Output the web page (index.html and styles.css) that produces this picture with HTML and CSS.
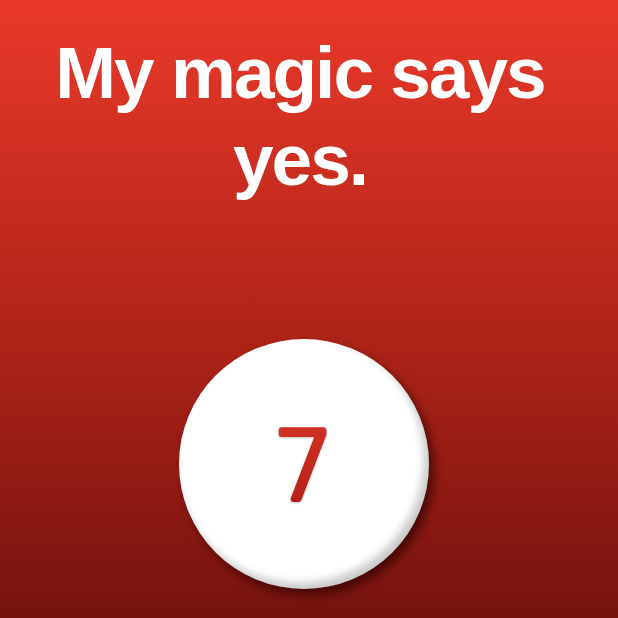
FILE: index.html
```
<!DOCTYPE html>
<html>
<head>
<meta charset="utf-8">
<link rel="stylesheet" href="styles.css">
</head>
<body>
<div class="page">
  <h1 class="title">My magic says yes.</h1>
  <div class="ball-wrap">
    <div class="ball">
      <svg class="num" width="120" height="120" viewBox="0 0 120 120">
        <defs>
          <linearGradient id="ng" x1="0" y1="0" x2="0" y2="1">
            <stop offset="0" stop-color="#d63424"/>
            <stop offset="1" stop-color="#b01b15"/>
          </linearGradient>
        </defs>
        <text x="60" y="95" text-anchor="middle" class="seven" fill="url(#ng)" stroke="url(#ng)">7</text>
      </svg>
    </div>
  </div>
</div>
</body>
</html>
```
FILE: styles.css
```
html, body {
  margin: 0;
  padding: 0;
  width: 618px;
  height: 618px;
  overflow: hidden;
}
body {
  background: linear-gradient(to bottom, #e9392a 0%, #b42519 50%, #76130f 100%);
  font-family: "Liberation Sans", Arial, sans-serif;
}
.page {
  width: 600px;
  padding-top: 29px;
}
.title {
  margin: 0;
  color: #fff;
  font-weight: bold;
  font-size: 73px;
  line-height: 87px;
  letter-spacing: -2px;
  text-align: center;
}
.ball-wrap {
  display: flex;
  justify-content: center;
  margin-top: 136px;
  padding-left: 7px;
}
.ball {
  width: 250px;
  height: 250px;
  border-radius: 50%;
  background: #fff;
  box-shadow: inset -5px -6px 9px rgba(0,0,0,0.22), 5px 6px 10px rgba(40,0,0,0.65);
  display: flex;
  align-items: center;
  justify-content: center;
}
.num {
  display: block;
}
.seven {
  font-family: "DejaVu Sans", sans-serif;
  font-weight: 200;
  font-size: 94px;
  stroke-width: 6;
  stroke-linejoin: round;
  filter: drop-shadow(0 1px 1px rgba(0,0,0,0.25));
}
```
